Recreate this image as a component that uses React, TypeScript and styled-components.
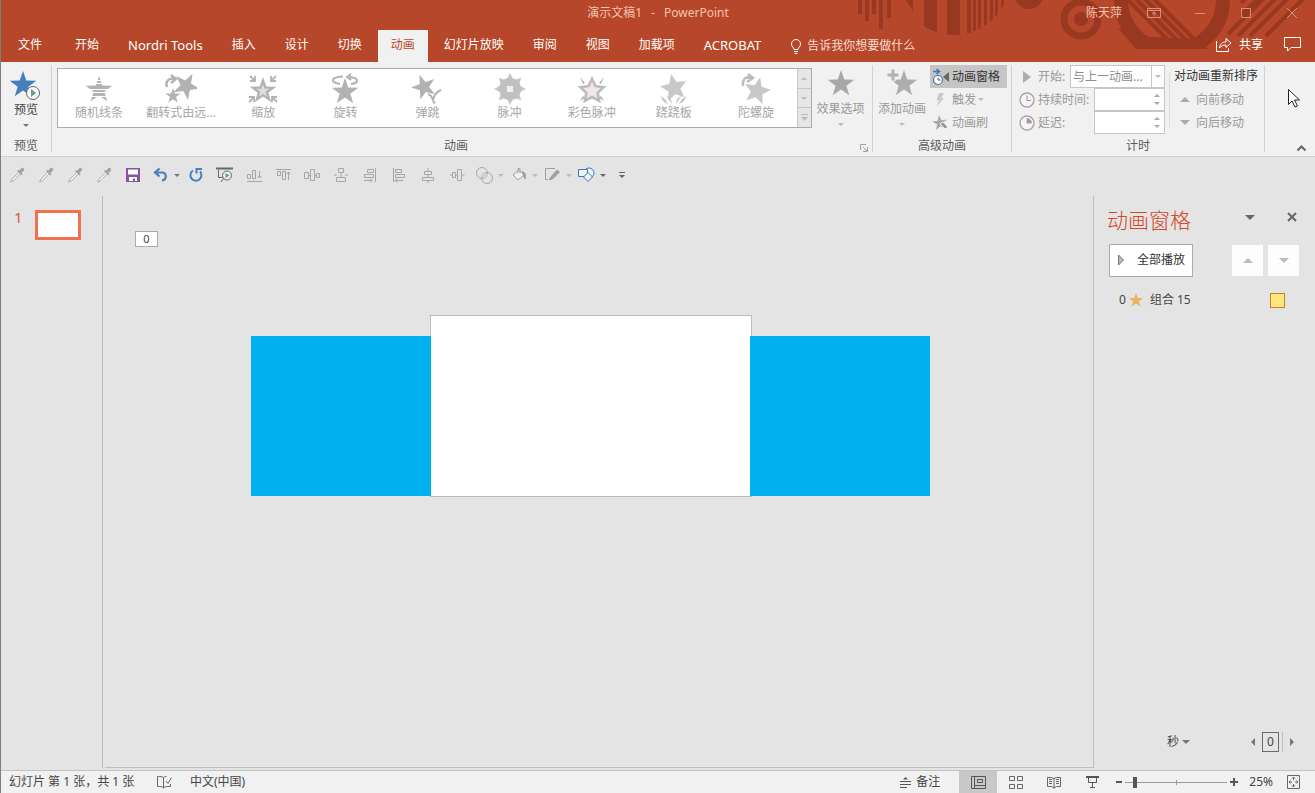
import React from "react";
import styled, { createGlobalStyle } from "styled-components";

const GlobalStyle = createGlobalStyle`
  *, *::before, *::after { box-sizing: border-box; }
  body {
    margin: 0;
    font-family: "Noto Sans", "Noto Sans CJK SC", sans-serif;
    font-size: 12px;
    line-height: 16px;
    color: #444;
    background: #e4e4e4;
  }
  button, input, select {
    font: inherit;
    color: inherit;
    background: none;
    border: 0;
    padding: 0;
    margin: 0;
    border-radius: 0;
    outline: none;
  }
  button { white-space: nowrap; }
  svg { display: block; flex: none; }
`;

const Window = styled.div`
  display: flex;
  flex-direction: column;
  min-height: 100vh;
  overflow: hidden;
  border-left: 1px solid #7f7f7f;
  background: #e4e4e4;
`;

/* ---------- Header ---------- */

const Header = styled.header`
  position: relative;
  background: #b7472a;
  color: #fff;
`;

const HeaderArt = styled.svg`
  position: absolute;
  top: 0;
  right: 0;
`;

const TitleBar = styled.div`
  position: relative;
  display: grid;
  grid-template-columns: 1fr auto 1fr;
  align-items: center;
  height: 26px;
  color: #f5c3b0;
`;

const DocTitle = styled.div`
  display: flex;
  gap: 9px;
  grid-column: 2;
`;

const WindowControls = styled.div`
  display: flex;
  align-items: center;
  justify-content: flex-end;
  height: 24px;
`;

const UserName = styled.span`
  margin-right: 9px;
`;

const ControlButton = styled.button`
  display: flex;
  justify-content: center;
  width: 46px;
  color: #d98f7b;
`;

const TabBar = styled.nav`
  position: relative;
  display: flex;
  align-items: flex-end;
  height: 36px;
  padding-left: 4px;
`;

const Tab = styled.button<{ $active?: boolean; $file?: boolean; $latin?: boolean }>`
  height: 32px;
  padding: 0 13px 2px;
  margin-right: ${(p) => (p.$file ? 7 : 3)}px;
  background: ${(p) => (p.$active ? "#f1f1f1" : "transparent")};
  color: ${(p) => (p.$active ? "#b7472a" : "#fff")};
  font-size: ${(p) => (p.$latin ? 13 : 12)}px;
`;

const TellMe = styled.button`
  display: flex;
  align-items: center;
  gap: 5px;
  height: 32px;
  padding: 0 13px;
  color: #f7dcd3;
`;

const ShareArea = styled.div`
  display: flex;
  align-items: center;
  gap: 21px;
  height: 32px;
  margin-left: auto;
  padding: 0 14px 3px 0;
`;

const ShareButton = styled.button`
  display: flex;
  align-items: center;
  gap: 7px;
`;

/* ---------- Ribbon ---------- */

const Ribbon = styled.section`
  position: relative;
  display: flex;
  height: 95px;
  padding-top: 3px;
  background: #f1f1f1;
  border-bottom: 1px solid #d2d2d2;
  white-space: nowrap;
`;

const Group = styled.div`
  display: flex;
  flex-direction: column;
  flex: none;
  height: 87px;
  border-right: 1px solid #d2d2d2;
`;

const GroupBody = styled.div<{ $pad?: string }>`
  display: flex;
  height: 75px;
  padding: ${(p) => p.$pad ?? "0"};
`;

const GroupFooter = styled.div<{ $launcher?: boolean }>`
  display: flex;
  align-items: center;
  height: 12px;
  padding-right: ${(p) => (p.$launcher ? 4 : 0)}px;
  color: #5c5c5c;
`;

const GroupCaption = styled.span`
  flex: 1;
  text-align: center;
`;

const LauncherButton = styled.button`
  align-self: flex-end;
`;

const LargeButton = styled.button<{ $muted?: boolean; $width: number }>`
  display: flex;
  flex-direction: column;
  align-items: center;
  width: ${(p) => p.$width}px;
  height: 66px;
  gap: 2px;
  padding-top: 1px;
  color: ${(p) => (p.$muted ? "#999" : "#444")};
  & > :last-child { margin-top: 4px; }
`;

const Gallery = styled.div`
  display: flex;
  width: 755px;
  height: 60px;
  background: #fff;
  border: 1px solid #ababab;
`;

const GalleryItem = styled.button`
  display: flex;
  flex: 1;
  flex-direction: column;
  align-items: center;
  padding-top: 4px;
  color: #a6a6a6;
`;

const GalleryScroll = styled.div`
  display: flex;
  flex-direction: column;
  width: 14px;
  background: #e6e6e6;
  border-left: 1px solid #c6c6c6;
`;

const ScrollButton = styled.button`
  display: flex;
  flex: 1;
  align-items: center;
  justify-content: center;
  & + & { border-top: 1px solid #c6c6c6; }
`;

const Stack = styled.div<{ $width?: number }>`
  display: flex;
  flex-direction: column;
  width: ${(p) => (p.$width ? `${p.$width}px` : "auto")};
`;

const SmallButton = styled.button<{ $active?: boolean; $muted?: boolean }>`
  display: flex;
  align-items: center;
  gap: 2px;
  height: 23px;
  padding: 0 7px 0 2px;
  background: ${(p) => (p.$active ? "#c5c5c5" : "transparent")};
  color: ${(p) => (p.$muted ? "#999" : "#333")};
`;

const TimingRow = styled.div`
  display: flex;
  align-items: center;
  height: 23px;
  color: #999;
  & > label { display: flex; align-items: center; gap: 3px; flex: 1; }
`;

const SelectBox = styled.div`
  display: flex;
  width: 95px;
  height: 23px;
  background: #fff;
  border: 1px solid #c6c6c6;
`;

const StartSelect = styled.select`
  appearance: none;
  flex: 1;
  min-width: 0;
  padding-left: 2px;
  color: #8c8c8c;
`;

const SelectArrow = styled.span`
  display: flex;
  align-items: center;
  justify-content: center;
  width: 13px;
  border-left: 1px solid #c6c6c6;
`;

const SpinBox = styled.div`
  display: flex;
  width: 71px;
  height: 23px;
  background: #fff;
  border: 1px solid #c6c6c6;
`;

const SpinInput = styled.input`
  flex: 1;
  min-width: 0;
`;

const SpinArrows = styled.div`
  display: flex;
  flex-direction: column;
  justify-content: space-evenly;
  width: 15px;
  align-items: center;
`;

const Reorder = styled.div`
  position: relative;
  display: flex;
  flex-direction: column;
  height: 69px;
  margin-left: 4px;
  padding: 0 6px 0 5px;
  background: linear-gradient(#dcdcdc, #dcdcdc) 0 7px / 1px 55px no-repeat;
  color: #333;
`;

const ReorderTitle = styled.span`
  height: 23px;
  line-height: 22px;
`;

const ReorderButton = styled.button`
  display: flex;
  align-items: center;
  gap: 6px;
  height: 23px;
  padding-left: 6px;
  color: #999;
`;

const CollapseButton = styled.button`
  align-self: flex-end;
  margin: 0 9px 4px auto;
`;

const Pointer = styled.svg`
  position: absolute;
  top: 26px;
  right: 14px;
`;

/* ---------- Quick access ---------- */

const QuickAccess = styled.div`
  display: flex;
  align-items: center;
  height: 36px;
  padding-left: 1px;
`;

const QuickButton = styled.button<{ $split?: boolean }>`
  display: flex;
  align-items: center;
  justify-content: center;
  gap: 5px;
  width: ${(p) => (p.$split ? 34 : 29)}px;
  height: 24px;
  padding-left: ${(p) => (p.$split ? 4 : 0)}px;
`;

/* ---------- Workspace ---------- */

const Workspace = styled.main`
  display: flex;
  flex: 1;
`;

const Thumbnails = styled.aside`
  display: flex;
  gap: 12px;
  width: 102px;
  margin: 3px 0 2px;
  padding: 14px 0 0 13px;
  border-right: 1px solid #bdbdbd;
  color: #d9593a;
  font-size: 15px;
  line-height: 14px;
`;

const Thumbnail = styled.button`
  width: 46px;
  height: 30px;
  background: #fff;
  border: 3px solid #f0714f;
`;

const Canvas = styled.section`
  position: relative;
  flex: 1;
  margin: 3px 0 2px 2px;
  border: solid #bdbdbd;
  border-width: 0 1px 1px 0;
`;

const AnimationTag = styled.div`
  position: absolute;
  left: 30px;
  top: 35px;
  width: 23px;
  height: 16px;
  border: 1px solid #ababab;
  background: #fff;
  font-size: 11px;
  line-height: 13px;
  text-align: center;
`;

const Slide = styled.div`
  position: absolute;
  left: calc(50% - 169px);
  top: 119px;
  width: 322px;
  height: 182px;
  background: #fff;
  border: 1px solid #bcbcbc;
`;

const BlueShape = styled.div<{ $side: "left" | "right" }>`
  position: absolute;
  top: 20px;
  left: ${(p) => (p.$side === "left" ? -180 : 319)}px;
  width: 180px;
  height: 160px;
  background: #00b0f0;
`;

const Pane = styled.aside`
  display: flex;
  flex-direction: column;
  width: 221px;
  padding: 13px 0 18px 13px;
`;

const PaneHeader = styled.div`
  display: flex;
  align-items: center;
  height: 28px;
  padding-right: 18px;
`;

const PaneTitle = styled.h2`
  flex: 1;
  margin: 0;
  color: #d24726;
  font-size: 21px;
  font-weight: 300;
  line-height: 28px;
`;

const PaneHeaderButton = styled.button`
  height: 20px;
  margin-left: 32px;
  padding-bottom: 6px;
`;

const PaneControls = styled.div`
  display: flex;
  align-items: center;
  gap: 5px;
  margin-top: 10px;
  padding: 0 16px 0 2px;
`;

const PlayAllButton = styled.button`
  display: flex;
  align-items: center;
  gap: 12px;
  width: 84px;
  height: 33px;
  margin-right: auto;
  padding: 0 7px 2px;
  background: #fff;
  border: 1px solid #ababab;
  color: #333;
`;

const MoveButton = styled.button`
  display: flex;
  align-items: center;
  justify-content: center;
  width: 31px;
  height: 31px;
  background: #fdfdfd;
`;

const EffectRow = styled.div`
  display: flex;
  align-items: center;
  gap: 3px;
  height: 18px;
  margin-top: 14px;
  padding: 0 30px 0 12px;
`;

const EffectName = styled.span`
  flex: 1;
  margin-left: 3px;
`;

const EffectBar = styled.span`
  width: 15px;
  height: 15px;
  background: #ffe57f;
  border: 1px solid #c8860f;
`;

const Timeline = styled.div`
  display: flex;
  align-items: center;
  justify-content: flex-end;
  margin-top: auto;
  padding-right: 21px;
`;

const SecondsButton = styled.button`
  display: flex;
  align-items: center;
  gap: 3px;
  margin-right: 61px;
`;

const TimeBox = styled.div`
  display: flex;
  margin: 0 7px;
  border-right: 1px solid #bdbdbd;
  padding-right: 3px;
`;

const TimeMark = styled.span`
  width: 17px;
  height: 20px;
  border: 1px solid #6a6a6a;
  line-height: 18px;
  text-align: center;
`;

/* ---------- Status bar ---------- */

const StatusBar = styled.footer`
  display: flex;
  align-items: center;
  height: 23px;
  padding: 0 15px 0 8px;
  border-top: 1px solid #c3c3c3;
  background: #f1f1f1;
  white-space: nowrap;
`;

const SlideCount = styled.span`
  min-width: 130px;
  word-spacing: normal;
`;

const StatusButton = styled.button<{ $end?: boolean }>`
  display: flex;
  align-items: center;
  gap: 5px;
  margin-left: ${(p) => (p.$end ? "auto" : "18px")};
`;

const Views = styled.div`
  display: flex;
  margin-left: 19px;
`;

const ViewButton = styled.button<{ $active?: boolean }>`
  display: flex;
  align-items: center;
  justify-content: center;
  width: 38px;
  height: 22px;
  background: ${(p) => (p.$active ? "#c8c8c8" : "transparent")};
`;

const ZoomGroup = styled.div`
  display: flex;
  align-items: center;
  gap: 3px;
  margin-left: 5px;
`;

const ZoomSlider = styled.input`
  appearance: none;
  width: 102px;
  height: 12px;
  background:
    linear-gradient(#9a9a9a, #9a9a9a) center / 1px 5px no-repeat,
    linear-gradient(#9a9a9a, #9a9a9a) center / 100% 1px no-repeat;
  &::-webkit-slider-thumb {
    appearance: none;
    width: 4px;
    height: 11px;
    background: #555;
  }
`;

const ZoomValue = styled.button`
  margin: 0 14px 0 11px;
`;

/* ---------- Icons ---------- */

const star = (cx: number, cy: number, r: number, turn = 0, inner = 0.4, n = 5) =>
  Array.from({ length: n * 2 }, (_, i) => {
    const a = ((turn - 90 + (i * 180) / n) * Math.PI) / 180;
    const d = i % 2 ? r * inner : r;
    return `${(cx + d * Math.cos(a)).toFixed(2)},${(cy + d * Math.sin(a)).toFixed(2)}`;
  }).join(" ");

const Arrow = ({ dir = "down", w = 6, color = "#777" }: { dir?: "up" | "down" | "left" | "right"; w?: number; color?: string }) => {
  const h = Math.ceil(w / 2);
  const side = dir === "left" || dir === "right";
  const points = {
    down: `0,0 ${w},0 ${w / 2},${h}`,
    up: `0,${h} ${w},${h} ${w / 2},0`,
    left: `${h},0 ${h},${w} 0,${w / 2}`,
    right: `0,0 0,${w} ${h},${w / 2}`,
  }[dir];
  return (
    <svg width={side ? h : w} height={side ? w : h} fill={color}>
      <polygon points={points} />
    </svg>
  );
};

const G = "#b2b2b2";

const galleryArt: Record<string, React.ReactNode> = {
  随机线条: (
    <>
      <polygon points={star(16, 17, 14)} fill={G} />
      <path d="M8 7.5h16M8 10.5h16M2 16.5h28M4 19.5h24M4 23.5h24" stroke="#fff" strokeWidth="1.2" />
    </>
  ),
  "翻转式由远...": (
    <>
      <polygon points={star(21, 13, 14, 28)} fill={G} />
      <polygon points={star(8, 23, 8)} fill={G} />
      <path d="M2 14c-2-6 2-9 7-8M6 2l5 4-5 4" fill="none" stroke={G} strokeWidth="2.4" />
    </>
  ),
  缩放: (
    <>
      <polygon points={star(16, 18, 14)} fill={G} />
      <polygon points={star(16, 18, 7)} fill="#e0dde0" />
      <path d="M3 3l5 5M8 3v5H3M29 3l-5 5M24 3v5h5M2 29l5-5M2 24h5v5M30 29l-5-5M25 29v-5h5" fill="none" stroke={G} strokeWidth="1.8" />
    </>
  ),
  旋转: (
    <>
      <polygon points={star(16, 19, 14)} fill={G} />
      <path d="M11 11C1 10 1 4 14 3.5M20 4c11 1 10 6 2 7M22 1l-4 3 4 3" fill="none" stroke={G} strokeWidth="2" />
    </>
  ),
  弹跳: (
    <>
      <polygon points={star(13, 14, 13, -20)} fill={G} />
      <path d="M30 17c-5 2-7 5-8 10-1-3-2-5-5-6M22 29.5h2.5" fill="none" stroke={G} strokeWidth="2" />
    </>
  ),
  脉冲: (
    <>
      <polygon points={star(16, 16, 16, 0, 0.6, 8)} fill="#c6c6c6" />
      <circle cx="16" cy="16" r="11" fill="#c0c0c0" />
      <rect x="13" y="13" width="6" height="6" fill="#f4eef2" />
    </>
  ),
  彩色脉冲: (
    <>
      <polygon points={star(16, 18, 15, 0, 0.5)} fill="#bcbcbc" />
      <polygon points={star(16, 18, 9, 0, 0.5)} fill="#efe6ec" />
      <path d="M4 4l5 6-2 1zM28 4l-5 6 2 1zM4 28l3-5 2 2zM28 28l-3-5-2 2z" fill={G} />
    </>
  ),
  跷跷板: (
    <>
      <polygon points={star(16, 15, 14, -12, 0.46)} fill="#c8c8c8" />
      <path d="M2 23l5 3 3 5-4-2zM8 22l5 4 1 5zM29 23l-5 3-3 5 4-2zM24 22l-5 4-1 5z" fill="#c4c4c4" />
    </>
  ),
  陀螺旋: (
    <>
      <polygon points={star(17, 18, 14, 13, 0.45)} fill="#c8c8c8" />
      <path d="M3 13C2 6 6 3 11 5M8 1l5 4-6 4" fill="none" stroke="#bdbdbd" strokeWidth="2.6" />
    </>
  ),
};

const PreviewIcon = () => (
  <svg width="32" height="34">
    <polygon points={star(13, 19, 14)} fill="#477fbe" />
    <circle cx="23" cy="27" r="6.5" fill="#f8f8f8" stroke="#666" />
    <path d="M21 23v8l5-4z" fill="#5aa58c" />
  </svg>
);

const DropperIcon = () => (
  <svg width="16" height="16" viewBox="0 0 16 16">
    <path d="M9.500 5.500L3 12l-1.500 3L5 13.500 11 7" fill="#f0f0f0" stroke="#b0b0b0" />
    <path d="M8 4l4.500 4.500 1-1-1-1.500C15 4 16 2.500 14.500 1.200S12 1 10.500 3.500L9 3z" fill="#a2a2a2" />
  </svg>
);

const Line = ({ d, color = "#a6a6a6", sw = 1 }: { d: string; color?: string; sw?: number }) => (
  <svg width="16" height="16" fill="none" stroke={color} strokeWidth={sw}>
    <path d={d} />
  </svg>
);

const SaveIcon = () => (
  <svg width="14" height="14">
    <path d="M0 0h14v14H0z" fill="#8653a8" />
    <path d="M2 1.500h10v5H2zM3 9h8v4H9v-2.500H7V13H3z" fill="#fff" />
  </svg>
);

const ClockIcon = ({ filled }: { filled?: boolean }) => (
  <svg width="16" height="16" fill="none" stroke="#a6a6a6">
    <circle cx="8" cy="8" r="7" strokeWidth="1.4" fill="#f7f3f6" />
    {filled ? <path d="M8 3.500V8h4.500A4.500 4.500 0 0 0 8 3.500z" fill="#999" /> : <path d="M8 3.500V8.500h4" stroke="#9a8f98" />}
  </svg>
);

const HeaderPattern = () => (
  <HeaderArt width="465" height="62" viewBox="0 0 465 62" fill="#983820" aria-hidden>
    <defs>
      <clipPath id="disc"><circle cx="104" cy="-21" r="56" /></clipPath>
      <clipPath id="inner"><circle cx="322" cy="0" r="44" /></clipPath>
      <clipPath id="band"><rect x="250" width="140" height="49" /></clipPath>
    </defs>
    <path d="M8 0h4v14H8zM15 0h4v21h-4zM22 0h4v14h-4zM29 0h4v29h-4zM37 0h4v18h-4zM56 0h7v11z" />
    <g clipPath="url(#disc)">
      <path d="M74 0h13v40H74zM97 0h13v40H97zM117 0h4v40h-4zM123 0h3v40h-3zM128 0h3v40h-3zM134 0h3v40h-3zM140 0h3v40h-3zM145 0h3v40h-3zM151 0h3v40h-3z" />
    </g>
    <circle cx="179" cy="-5" r="14" />
    <circle cx="231" cy="19" r="17" fill="none" stroke="#983820" strokeWidth="7" />
    <circle cx="231" cy="19" r="7" />
    <g clipPath="url(#band)">
      <circle cx="322" cy="0" r="51" fill="none" stroke="#983820" strokeWidth="14" />
      <path d="M268 28l18 21h72l-12-10-46-2z" />
    </g>
    <path clipPath="url(#inner)" d="M270 -8l58 58M279 -8l58 58M288 -8l58 58M297 -8l58 58" stroke="#983820" strokeWidth="4" />
    <path d="M391 3l5-5M391 15l18-17M378 34l36-36M388 36l38-38M400 36l38-38M416 36l38-38" stroke="#983820" strokeWidth="4" />
  </HeaderArt>
);

const tabs = ["文件", "开始", "Nordri Tools", "插入", "设计", "切换", "动画", "幻灯片放映", "审阅", "视图", "加载项", "ACROBAT"];

const alignIcons = [
  "M1.500 7.500h3v4h-3zM6.500 3.500h3v8h-3zM1 14.500h15M13.500 4v7M11.500 9l2 2 2-2",
  "M1 2.500h15M2.500 4.500h3v4h-3zM7.500 4.500h3v8h-3zM13.500 13V5M11.500 7l2-2 2 2",
  "M.5 5.500h4v6h-4zM6.500 2.500h4v11h-4zM12.500 6.500h3v4h-3zM4.500 8.500h2M10.500 8.500h2",
  "M5.500 1.500h5v4h-5zM3.500 10.500h9v4h-9zM8 5.500v5M1 8h3M12 8h3",
  "M13.500 1v14M5.500 2.500h6v3h-6zM2.500 7.500h9v3h-9zM2 13.500h8M8 11.500l2 2-2 2",
  "M2.500 1v14M4.500 2.500h6v3h-6zM4.500 7.500h9v3h-9zM12 13.500H4M6 11.500l-2 2 2 2",
  "M8 1v3M8 8v2M8 14v2M4.500 4.500h7v3h-7zM2.500 10.500h11v3h-11z",
  "M1 8h2M6.500 8h2M12.500 8h3M3.500 5.500h3v5h-3zM8.500 2.500h4v11h-4z",
];

export default function App() {
  return (
    <>
      <GlobalStyle />
      <Window>
        <Header>
          <HeaderPattern />
          <TitleBar>
            <DocTitle>
              <span>演示文稿1</span>
              <span>-</span>
              <span>PowerPoint</span>
            </DocTitle>
            <WindowControls>
              <UserName>陈天萍</UserName>
              <ControlButton aria-label="功能区显示选项">
                <svg width="14" height="12" fill="none" stroke="currentColor"><path d="M.5 1.500h13v9H.5zM.5 3.500h13M7 9.500v-4M5 7l2-2 2 2" /></svg>
              </ControlButton>
              <ControlButton aria-label="最小化">
                <svg width="11" height="11" stroke="currentColor"><path d="M0 5.500h10" /></svg>
              </ControlButton>
              <ControlButton aria-label="最大化">
                <svg width="11" height="11" fill="none" stroke="currentColor"><path d="M.5.5h9v9h-9z" /></svg>
              </ControlButton>
              <ControlButton aria-label="关闭">
                <svg width="11" height="11" stroke="currentColor"><path d="M0 0l10 10M10 0L0 10" /></svg>
              </ControlButton>
            </WindowControls>
          </TitleBar>
          <TabBar>
            {tabs.map((t) => (
              <Tab key={t} $active={t === "动画"} $file={t === "文件"} $latin={/^[A-Z]/.test(t)}>{t}</Tab>
            ))}
            <TellMe>
              <svg width="12" height="15" fill="none" stroke="#fff"><path d="M4 10.500C4 8.500 1.500 8 1.500 5a4.500 4.500 0 0 1 9 0c0 3-2.500 3.500-2.500 5.500zM4 12.500h4M4.500 14.500h3" /></svg>
              告诉我你想要做什么
            </TellMe>
            <ShareArea>
              <ShareButton>
                <svg width="16" height="15" fill="none" stroke="#fff"><path d="M.5 4v10.500h12V11M3.500 11C4 7 6 5 10 5V1.500l5 4.500-5 4.500V8C7 8 5 9 3.500 11z" /></svg>
                共享
              </ShareButton>
              <button aria-label="批注">
                <svg width="17" height="15" fill="none" stroke="#fff"><path d="M.5.5h16v10H7l-3.500 3.500v-3.500h-3z" /></svg>
              </button>
            </ShareArea>
          </TabBar>
        </Header>

        <Ribbon>
          <Group>
            <GroupBody>
              <LargeButton $width={50}>
                <PreviewIcon />
                <span>预览</span>
                <Arrow />
              </LargeButton>
            </GroupBody>
            <GroupFooter><GroupCaption>预览</GroupCaption></GroupFooter>
          </Group>

          <Group>
            <GroupBody $pad="3px 3px 0 5px">
              <Gallery>
                {Object.entries(galleryArt).map(([name, art]) => (
                  <GalleryItem key={name}>
                    <svg width="32" height="32" viewBox="0 0 32 32">{art}</svg>
                    {name}
                  </GalleryItem>
                ))}
                <GalleryScroll>
                  <ScrollButton aria-label="上一行"><Arrow dir="up" color="#bbb" /></ScrollButton>
                  <ScrollButton aria-label="下一行"><Arrow color="#bbb" /></ScrollButton>
                  <ScrollButton aria-label="其他">
                    <svg width="7" height="7" fill="#bbb"><path d="M0 0h7v1H0zM0 3h7L3.500 7z" /></svg>
                  </ScrollButton>
                </GalleryScroll>
              </Gallery>
              <LargeButton $width={57} $muted>
                <svg width="30" height="30"><polygon points={star(15, 15, 14)} fill="#a8a8a8" /></svg>
                <span>效果选项</span>
                <Arrow color="#bbb" />
              </LargeButton>
            </GroupBody>
            <GroupFooter $launcher>
              <GroupCaption>动画</GroupCaption>
              <LauncherButton aria-label="动画选项">
                <svg width="8" height="8" fill="none" stroke="#a0a0a0"><path d="M.5 6V.5H6M3 3l4 4M7.500 3v4.500H3" /></svg>
              </LauncherButton>
            </GroupFooter>
          </Group>

          <Group>
            <GroupBody $pad="0 4px 0 1px">
              <LargeButton $width={56} $muted>
                <svg width="32" height="33">
                  <polygon points={star(18, 18, 14)} fill="#aeaeae" />
                  <path d="M5 3h4v4h4v4H9v4H5v-4H1V7h4z" fill="#b4b4b4" stroke="#f1f1f1" />
                </svg>
                <span>添加动画</span>
                <Arrow color="#bbb" />
              </LargeButton>
              <Stack>
                <SmallButton $active>
                  <svg width="18" height="18" fill="none">
                    <path d="M1 3.500h6M4.500 1l3 2.500-3 2.500" stroke="#3f76b5" strokeWidth="1.6" />
                    <circle cx="6" cy="12" r="4.5" fill="#fff" stroke="#3f76b5" strokeWidth="1.2" />
                    <path d="M6 9.500V12h2.500" stroke="#555" />
                    <path d="M17 4v10l-6-5z" fill="#666" />
                  </svg>
                  动画窗格
                </SmallButton>
                <SmallButton $muted>
                  <svg width="18" height="16"><path d="M7 1h5L9.500 6H12L4.500 15 7 8.500H4.500z" fill="#c9c9c9" /></svg>
                  触发<Arrow color="#bbb" />
                </SmallButton>
                <SmallButton $muted>
                  <svg width="18" height="16">
                    <polygon points={star(8, 8, 8, -8)} fill="#a8a8a8" />
                    <path d="M8 9l5 5 3-2-5-5zM12 6l4 3" fill="#999" stroke="#f1f1f1" />
                  </svg>
                  动画刷
                </SmallButton>
              </Stack>
            </GroupBody>
            <GroupFooter><GroupCaption>高级动画</GroupCaption></GroupFooter>
          </Group>

          <Group>
            <GroupBody $pad="0 0 0 7px">
              <Stack $width={146}>
                <TimingRow>
                  <label htmlFor="start">
                    <svg width="16" height="12" fill="#adadad"><path d="M4 0v12l8-6z" /></svg>
                    开始:
                  </label>
                  <SelectBox>
                    <StartSelect id="start"><option>与上一动画...</option></StartSelect>
                    <SelectArrow><Arrow color="#bbb" /></SelectArrow>
                  </SelectBox>
                </TimingRow>
                <TimingRow>
                  <label htmlFor="duration"><ClockIcon />持续时间:</label>
                  <SpinBox>
                    <SpinInput id="duration" />
                    <SpinArrows><Arrow dir="up" color="#aaa" /><Arrow color="#aaa" /></SpinArrows>
                  </SpinBox>
                </TimingRow>
                <TimingRow>
                  <label htmlFor="delay"><ClockIcon filled />延迟:</label>
                  <SpinBox>
                    <SpinInput id="delay" />
                    <SpinArrows><Arrow dir="up" color="#aaa" /><Arrow color="#aaa" /></SpinArrows>
                  </SpinBox>
                </TimingRow>
              </Stack>
              <Reorder>
                <ReorderTitle>对动画重新排序</ReorderTitle>
                <ReorderButton><Arrow dir="up" w={10} color="#aaa" />向前移动</ReorderButton>
                <ReorderButton><Arrow w={10} color="#aaa" />向后移动</ReorderButton>
              </Reorder>
            </GroupBody>
            <GroupFooter><GroupCaption>计时</GroupCaption></GroupFooter>
          </Group>

          <CollapseButton aria-label="折叠功能区">
            <svg width="9" height="7" fill="none" stroke="#666" strokeWidth="2"><path d="M.5 5.500l4-4 4 4" /></svg>
          </CollapseButton>
          <Pointer width="14" height="21" aria-hidden>
            <path d="M1.500 1.500v15l3.500-3.500 3 6 2.500-1-3-6h5z" fill="#fff" stroke="#222" />
          </Pointer>
        </Ribbon>

        <QuickAccess>
          {[0, 1, 2, 3].map((i) => <QuickButton key={i} aria-label="取色器"><DropperIcon /></QuickButton>)}
          <QuickButton aria-label="保存"><SaveIcon /></QuickButton>
          <QuickButton $split aria-label="撤消">
            <Line d="M6.500 1.500L2 5.500l4.500 4M2 5.500h7c5 0 5 7.500 0 8" color="#477fbe" sw={2.2} />
            <Arrow />
          </QuickButton>
          <QuickButton aria-label="恢复">
            <Line d="M5 3.500A5.500 5.500 0 1 0 12 4.500M8.500 6.500V2H14" color="#477fbe" sw={2} />
          </QuickButton>
          <QuickButton aria-label="从头开始放映">
            <svg width="17" height="16" fill="none" stroke="#666">
              <path d="M0 1.500h17" strokeWidth="2" /><path d="M2.500 3v7.500H8M5 15l3-4" />
              <circle cx="11" cy="8.500" r="4.5" fill="#eee" />
              <path d="M9.500 6v5l4-2.500z" fill="#5aa58c" stroke="none" />
            </svg>
          </QuickButton>
          {alignIcons.map((d) => <QuickButton key={d} aria-label="对齐"><Line d={d} /></QuickButton>)}
          <QuickButton $split aria-label="合并形状">
            <svg width="17" height="17" fill="none" stroke="#a6a6a6"><circle cx="6" cy="6" r="5.5" /><circle cx="11" cy="11" r="5.5" /><circle cx="8.500" cy="8.500" r="3" fill="#d0d0d0" stroke="none" /></svg>
            <Arrow color="#bbb" />
          </QuickButton>
          <QuickButton $split aria-label="形状填充">
            <svg width="16" height="16"><path d="M2 8l6-5 5 5-6 5zM7 6V1.500h2V6" fill="#f0f0f0" stroke="#a0a0a0" /><path d="M11 4c4 1 5 5 3 9l-2-4z" fill="#a0a0a0" /></svg>
            <Arrow color="#bbb" />
          </QuickButton>
          <QuickButton $split aria-label="形状轮廓">
            <svg width="17" height="16" fill="none" stroke="#a0a0a0"><path d="M11 1.500H1.500v11H4" /><path d="M6 11l7-8 2.500 2-7 7-3 1z" fill="#a0a0a0" /></svg>
            <Arrow color="#bbb" />
          </QuickButton>
          <QuickButton $split aria-label="形状">
            <svg width="17" height="16" fill="#eef3fa" stroke="#3f76b5"><circle cx="11" cy="6" r="5" /><path d="M.5 2.500h9v7h-9z" /><path d="M10 5.500l4.500 4.500-4.500 4.500L5.500 10z" /></svg>
            <Arrow color="#666" />
          </QuickButton>
          <QuickButton aria-label="自定义快速访问工具栏">
            <svg width="6" height="7" fill="#666"><path d="M0 0h6v1H0zM0 3h6L3 6z" /></svg>
          </QuickButton>
        </QuickAccess>

        <Workspace>
          <Thumbnails>
            <span>1</span>
            <Thumbnail aria-label="幻灯片 1" />
          </Thumbnails>
          <Canvas>
            <AnimationTag>0</AnimationTag>
            <Slide>
              <BlueShape $side="left" />
              <BlueShape $side="right" />
            </Slide>
          </Canvas>
          <Pane>
            <PaneHeader>
              <PaneTitle>动画窗格</PaneTitle>
              <PaneHeaderButton aria-label="窗格选项"><Arrow w={10} color="#666" /></PaneHeaderButton>
              <PaneHeaderButton aria-label="关闭窗格">
                <svg width="10" height="10" stroke="#666" strokeWidth="2"><path d="M1 1l8 8M9 1L1 9" /></svg>
              </PaneHeaderButton>
            </PaneHeader>
            <PaneControls>
              <PlayAllButton>
                <svg width="8" height="12" fill="#b8b8b8" stroke="#777"><path d="M1.500 1v10l5-5z" /></svg>
                全部播放
              </PlayAllButton>
              <MoveButton aria-label="向前移动"><Arrow dir="up" w={10} color="#bbb" /></MoveButton>
              <MoveButton aria-label="向后移动"><Arrow w={10} color="#bbb" /></MoveButton>
            </PaneControls>
            <EffectRow>
              <span>0</span>
              <svg width="15" height="15"><polygon points={star(7, 7.5, 7.5)} fill="#ebb25c" /></svg>
              <EffectName>组合 15</EffectName>
              <EffectBar />
            </EffectRow>
            <Timeline>
              <SecondsButton>秒<Arrow w={8} /></SecondsButton>
              <button aria-label="向左滚动"><Arrow dir="left" w={8} /></button>
              <TimeBox><TimeMark>0</TimeMark></TimeBox>
              <button aria-label="向右滚动"><Arrow dir="right" w={8} /></button>
            </Timeline>
          </Pane>
        </Workspace>

        <StatusBar>
          <SlideCount>幻灯片 第 1 张，共 1 张</SlideCount>
          <StatusButton aria-label="拼写检查">
            <svg width="15" height="14" fill="none" stroke="#666"><path d="M9.500 1.500C8 1.500 7 2 6.500 2.500 5.500 1.500 3 1.500.5 1.500v10c3 0 5 0 6 1.500 1-1.500 3-1.500 7-1.500V9M6.500 2.500V13M9 6l2 2.500 3.500-6" /></svg>
          </StatusButton>
          <StatusButton>中文(中国)</StatusButton>
          <StatusButton $end>
            <svg width="11" height="12" fill="none" stroke="#555"><path d="M0 5.500h11M0 8.500h11M0 11.500h7" /><path d="M3 3.500h5L5.500 1z" fill="#555" stroke="none" /></svg>
            备注
          </StatusButton>
          <Views>
            <ViewButton $active aria-label="普通视图">
              <svg width="15" height="13" fill="none" stroke="#555"><path d="M.5.5h14v12H.5zM3.500.5v12M3.500 9.500h11M6.500 3.500h5v3h-5z" /></svg>
            </ViewButton>
            <ViewButton aria-label="幻灯片浏览">
              <svg width="14" height="13" fill="none" stroke="#666"><path d="M.5.5h5v4h-5zM8.500.5h5v4h-5zM.5 8.500h5v4h-5zM8.500 8.500h5v4h-5z" /></svg>
            </ViewButton>
            <ViewButton aria-label="阅读视图">
              <svg width="14" height="13" fill="none" stroke="#666"><path d="M.5 1.500h4l2.500 1 2.500-1h4v9h-4l-2.500 1.500-2.500-1.500h-4zM7 2.500v10M2 3.500h3M2 5.500h3M2 7.500h3M9 3.500h3M9 5.500h3M9 7.500h3" /></svg>
            </ViewButton>
            <ViewButton aria-label="幻灯片放映">
              <svg width="13" height="12" fill="none" stroke="#555"><path d="M0 .5h13M0 1.500h13M2.500 2v4.500h8V2M6.500 7v4M4 11.500h5" /></svg>
            </ViewButton>
          </Views>
          <ZoomGroup>
            <button aria-label="缩小"><svg width="6" height="8" fill="#555"><path d="M0 3h6v2H0z" /></svg></button>
            <ZoomSlider type="range" min={10} max={190} defaultValue={25} aria-label="缩放" />
            <button aria-label="放大"><svg width="8" height="8" fill="#555"><path d="M0 3h3V0h2v3h3v2H5v3H3V5H0z" /></svg></button>
          </ZoomGroup>
          <ZoomValue>25%</ZoomValue>
          <button aria-label="适应窗口">
            <svg width="13" height="14" fill="none" stroke="#666"><path d="M.5.5h12v13H.5zM6.500 2v3M6.500 9v3M2 7h3M8 7h3M5 3.500l1.500-1.500 1.500 1.500M5 10.500l1.500 1.500 1.500-1.500M3.500 5.500L2 7l1.500 1.500M9.500 5.500L11 7l-1.500 1.500" /></svg>
          </button>
        </StatusBar>
      </Window>
    </>
  );
}
